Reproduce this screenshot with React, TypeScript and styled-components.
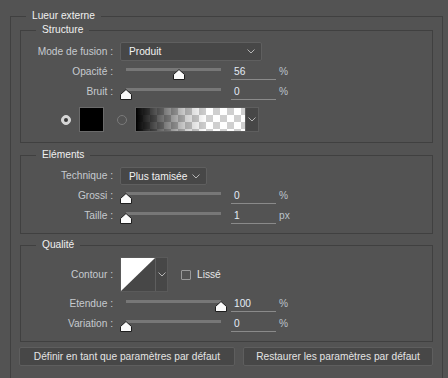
import styled, { createGlobalStyle } from "styled-components";

const GlobalStyle = createGlobalStyle`
  html, body {
    margin: 0;
    padding: 0;
    background: #535353;
    overflow: hidden;
  }
  body {
    font-family: "Liberation Sans", Arial, sans-serif;
    font-size: 10.2px;
    color: #c4c4c4;
  }
`;

const Panel = styled.fieldset`
  margin: 9px 0 0 10px;
  padding: 0 9px 40px;
  width: 433px;
  box-sizing: border-box;
  border: 1px solid #404040;
  min-inline-size: 0;
`;

const Group = styled.fieldset<{ $gap?: number; $bottom: number }>`
  margin: ${(p) => p.$gap ?? 0}px 0 0;
  padding: 0 0 ${(p) => p.$bottom}px;
  border: 1px solid #404040;
  min-inline-size: 0;
  display: flex;
  flex-direction: column;
`;

const Legend = styled.legend<{ $outer?: boolean }>`
  margin-left: ${(p) => (p.$outer ? 6 : 15)}px;
  padding: 0 6px;
  line-height: 14px;
  color: #f0f0f0;
`;

const Row = styled.div<{ $top?: number; $h: number; $center?: boolean }>`
  display: flex;
  align-items: ${(p) => (p.$center ? "center" : "flex-start")};
  height: ${(p) => p.$h}px;
  margin-top: ${(p) => p.$top ?? 0}px;
`;

const Label = styled.span`
  width: 92px;
  margin-right: 7px;
  text-align: right;
  line-height: 14px;
  white-space: nowrap;
  color: #c6cacf;
`;

const SelectBox = styled.div<{ $w: number; $h: number }>`
  width: ${(p) => p.$w}px;
  height: ${(p) => p.$h}px;
  box-sizing: border-box;
  border: 1px solid #5f5f5f;
  border-radius: 2px;
  background: #474747;
  display: flex;
  align-items: center;
  justify-content: space-between;
  padding: 0 6px 0 8px;
  color: #f2f2f2;
`;

const Slider = styled.div`
  position: relative;
  width: 107px;
  height: 20px;
`;

const Track = styled.div`
  position: absolute;
  top: 3px;
  left: 6px;
  right: 6px;
  height: 3px;
  background: #777777;
`;

const Thumb = styled.svg`
  position: absolute;
  top: 4px;
`;

const Value = styled.div`
  margin-left: 4px;
  width: 42px;
  height: 14px;
  box-sizing: content-box;
  border-bottom: 1px solid #8a8a8a;
  padding-left: 3px;
  line-height: 14px;
  color: #e4ecf5;
`;

const Unit = styled.span`
  margin-left: 3px;
  line-height: 14px;
  color: #bcc3cb;
`;

const Radio = styled.span<{ $on?: boolean }>`
  width: 10px;
  height: 10px;
  box-sizing: border-box;
  border-radius: 50%;
  display: flex;
  align-items: center;
  justify-content: center;
  background: ${(p) => (p.$on ? "#d6d6d6" : "transparent")};
  border: 1px solid ${(p) => (p.$on ? "#d6d6d6" : "#7a7a7a")};

  &::after {
    content: "";
    display: ${(p) => (p.$on ? "block" : "none")};
    width: 4px;
    height: 4px;
    border-radius: 50%;
    background: #3a3a3a;
  }
`;

const ColorRow = styled.div`
  display: flex;
  align-items: center;
  height: 25px;
  margin-top: 2px;
  padding-left: 40px;
`;

const Swatch = styled.div`
  width: 25px;
  height: 25px;
  box-sizing: border-box;
  border: 1px solid #6a6a6a;
  background: #000;
  margin: 0 13px 0 8px;
`;

const Picker = styled.div`
  display: flex;
  height: 25px;
  box-sizing: border-box;
  border: 1px solid #5e5e5e;
  margin-left: 8px;
`;

const Gradient = styled.div`
  width: 109px;
  background:
    linear-gradient(to right, #000 0%, rgba(0, 0, 0, 0.6) 22%, rgba(0, 0, 0, 0.2) 45%, rgba(0, 0, 0, 0) 65%),
    conic-gradient(#cfcfcf 0 25%, #fff 0 50%, #cfcfcf 0 75%, #fff 0) 0 0 / 14px 14px;
`;

const Drop = styled.div<{ $w: number }>`
  width: ${(p) => p.$w}px;
  background: #474747;
  border-left: 1px solid #5e5e5e;
  display: flex;
  align-items: center;
  justify-content: center;
`;

const Contour = styled.div`
  display: flex;
  height: 35px;
  border: 1px solid #5a5a5a;
  box-sizing: border-box;
`;

const Check = styled.span`
  width: 10px;
  height: 10px;
  box-sizing: border-box;
  border: 1px solid #9a9a9a;
  border-radius: 1px;
  margin: 0 6px 0 13px;
`;

const Lisse = styled.span`
  color: #e6e6e6;
`;

const Buttons = styled.div`
  display: flex;
  gap: 8px;
  margin: 5px 0 0 -1px;
`;

const Button = styled.button<{ $w: number }>`
  width: ${(p) => p.$w}px;
  height: 19px;
  padding: 0;
  border: 1px solid #5e5e5e;
  border-radius: 2px;
  background: #474747;
  color: #e4e4e4;
  font-family: inherit;
  font-size: 10.2px;
`;

function Chevron() {
  return (
    <svg width="8" height="5" viewBox="0 0 8 5">
      <path d="M0.5 0.5 L4 4 L7.5 0.5" fill="none" stroke="#b5b5b5" strokeWidth="1" />
    </svg>
  );
}

function SliderRow({
  label,
  pct,
  value,
  unit,
  top,
}: {
  label: string;
  pct: number;
  value: string;
  unit: string;
  top?: number;
}) {
  return (
    <Row $h={20} $top={top}>
      <Label>{label}</Label>
      <Slider>
        <Track />
        <Thumb width="12" height="11" viewBox="0 0 12 11" style={{ left: 6 + pct * 95 - 6 }}>
          <path d="M6 0.5 L11.5 5.5 V10.5 H0.5 V5.5 Z" fill="#fafafa" stroke="#1e1e1e" strokeLinejoin="round" />
        </Thumb>
      </Slider>
      <Value>{value}</Value>
      <Unit>{unit}</Unit>
    </Row>
  );
}

export default function App() {
  return (
    <>
      <GlobalStyle />
      <Panel>
        <Legend $outer>Lueur externe</Legend>

        <Group $bottom={10}>
          <Legend>Structure</Legend>
          <Row $h={19} $top={5} $center>
            <Label>Mode de fusion :</Label>
            <SelectBox $w={142} $h={19}>
              <span>Produit</span>
              <Chevron />
            </SelectBox>
          </Row>
          <SliderRow label="Opacité :" pct={0.56} value="56" unit="%" top={4} />
          <SliderRow label="Bruit :" pct={0} value="0" unit="%" />
          <ColorRow>
            <Radio $on />
            <Swatch />
            <Radio />
            <Picker>
              <Gradient />
              <Drop $w={12}>
                <Chevron />
              </Drop>
            </Picker>
          </ColorRow>
        </Group>

        <Group $gap={5} $bottom={4}>
          <Legend>Eléments</Legend>
          <Row $h={18} $top={5} $center>
            <Label>Technique :</Label>
            <SelectBox $w={87} $h={18}>
              <span>Plus tamisée</span>
              <Chevron />
            </SelectBox>
          </Row>
          <SliderRow label="Grossi :" pct={0} value="0" unit="%" top={4} />
          <SliderRow label="Taille :" pct={0} value="1" unit="px" />
        </Group>

        <Group $gap={4} $bottom={4}>
          <Legend>Qualité</Legend>
          <Row $h={35} $top={5} $center>
            <Label>Contour :</Label>
            <Contour>
              <svg width="34" height="33" viewBox="0 0 34 33">
                <rect width="34" height="33" fill="#474747" />
                <polygon points="0,0 34,0 0,33" fill="#ffffff" />
              </svg>
              <Drop $w={11}>
                <Chevron />
              </Drop>
            </Contour>
            <Check />
            <Lisse>Lissé</Lisse>
          </Row>
          <SliderRow label="Etendue :" pct={1} value="100" unit="%" top={5} />
          <SliderRow label="Variation :" pct={0} value="0" unit="%" />
        </Group>

        <Buttons>
          <Button $w={217}>Définir en tant que paramètres par défaut</Button>
          <Button $w={191}>Restaurer les paramètres par défaut</Button>
        </Buttons>
      </Panel>
    </>
  );
}
